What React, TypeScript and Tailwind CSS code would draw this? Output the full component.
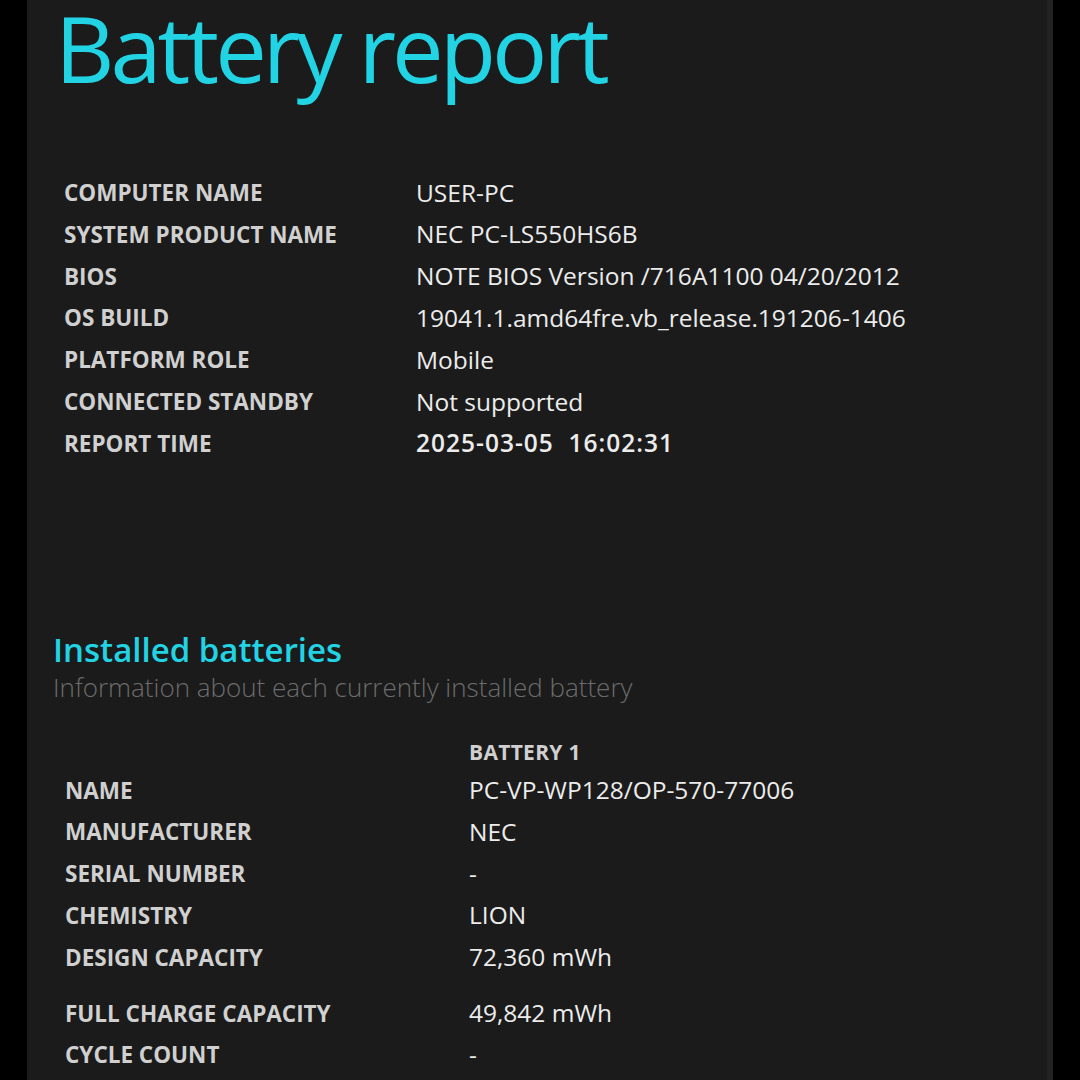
const systemInfo = [
  { label: "COMPUTER NAME", value: "USER-PC" },
  { label: "SYSTEM PRODUCT NAME", value: "NEC PC-LS550HS6B" },
  { label: "BIOS", value: "NOTE BIOS Version /716A1100 04/20/2012" },
  { label: "OS BUILD", value: "19041.1.amd64fre.vb_release.191206-1406" },
  { label: "PLATFORM ROLE", value: "Mobile" },
  { label: "CONNECTED STANDBY", value: "Not supported" },
  { label: "REPORT TIME", value: "2025-03-05\u00a0\u00a016:02:31", strong: true },
];

const batteryInfo = [
  { label: "NAME", value: "PC-VP-WP128/OP-570-77006" },
  { label: "MANUFACTURER", value: "NEC" },
  { label: "SERIAL NUMBER", value: "-" },
  { label: "CHEMISTRY", value: "LION" },
  { label: "DESIGN CAPACITY", value: "72,360 mWh" },
  { label: "FULL CHARGE CAPACITY", value: "49,842 mWh", gap: true },
  { label: "CYCLE COUNT", value: "-" },
];

type RowProps = {
  label: string;
  value: string;
  strong?: boolean;
  labelWidth: string;
  className?: string;
};

const InfoRow = ({ label, value, strong, labelWidth, className }: RowProps) => (
  <div className={`flex items-center h-[41.8px] whitespace-nowrap ${className ?? ""}`}>
    <div className={`${labelWidth} shrink-0 text-[22.5px] font-bold text-[#d0d0d0]`}>{label}</div>
    <div
      className={`text-[24.5px] text-[#ececec] ${strong ? "font-semibold tracking-[1px]" : "font-normal"}`}
    >
      {value}
    </div>
  </div>
);

export default function App() {
  return (
    <div
      className="w-[1080px] h-[1080px] bg-black overflow-hidden flex"
      style={{ fontFamily: '"Open Sans", "Noto Sans", sans-serif' }}
    >
      <div className="ml-[27px] w-[1026px] h-full pt-[2px] bg-[#1b1b1b] border-r-[6px] border-[#222222] flex flex-col">
        <h1 className="ml-[28px] text-[92px] leading-[100px] -my-[4px] tracking-[-4px] font-normal text-[#22d3e4] whitespace-nowrap">
          Battery report
        </h1>

        <div className="mt-[78px] ml-[37px] flex flex-col">
          {systemInfo.map((row) => (
            <InfoRow key={row.label} label={row.label} value={row.value} strong={row.strong} labelWidth="w-[352px]" />
          ))}
        </div>

        <div className="mt-[165px] ml-[26px] flex flex-col whitespace-nowrap">
          <h2 className="text-[33px] leading-[40px] font-semibold text-[#22d3e4]">Installed batteries</h2>
          <p className="text-[26px] leading-[34px] font-light text-[#6c6c6c]">
            Information about each currently installed battery
          </p>
        </div>

        <div className="mt-[32px] ml-[38px] flex flex-col">
          <div className="flex items-center h-[34px]">
            <div className="w-[404px] shrink-0" />
            <div className="text-[21px] font-bold text-[#d0d0d0] tracking-[0.3px]">BATTERY 1</div>
          </div>
          {batteryInfo.map((row) => (
            <InfoRow
              key={row.label}
              label={row.label}
              value={row.value}
              labelWidth="w-[404px]"
              className={row.gap ? "mt-[14px]" : ""}
            />
          ))}
        </div>
      </div>
    </div>
  );
}
